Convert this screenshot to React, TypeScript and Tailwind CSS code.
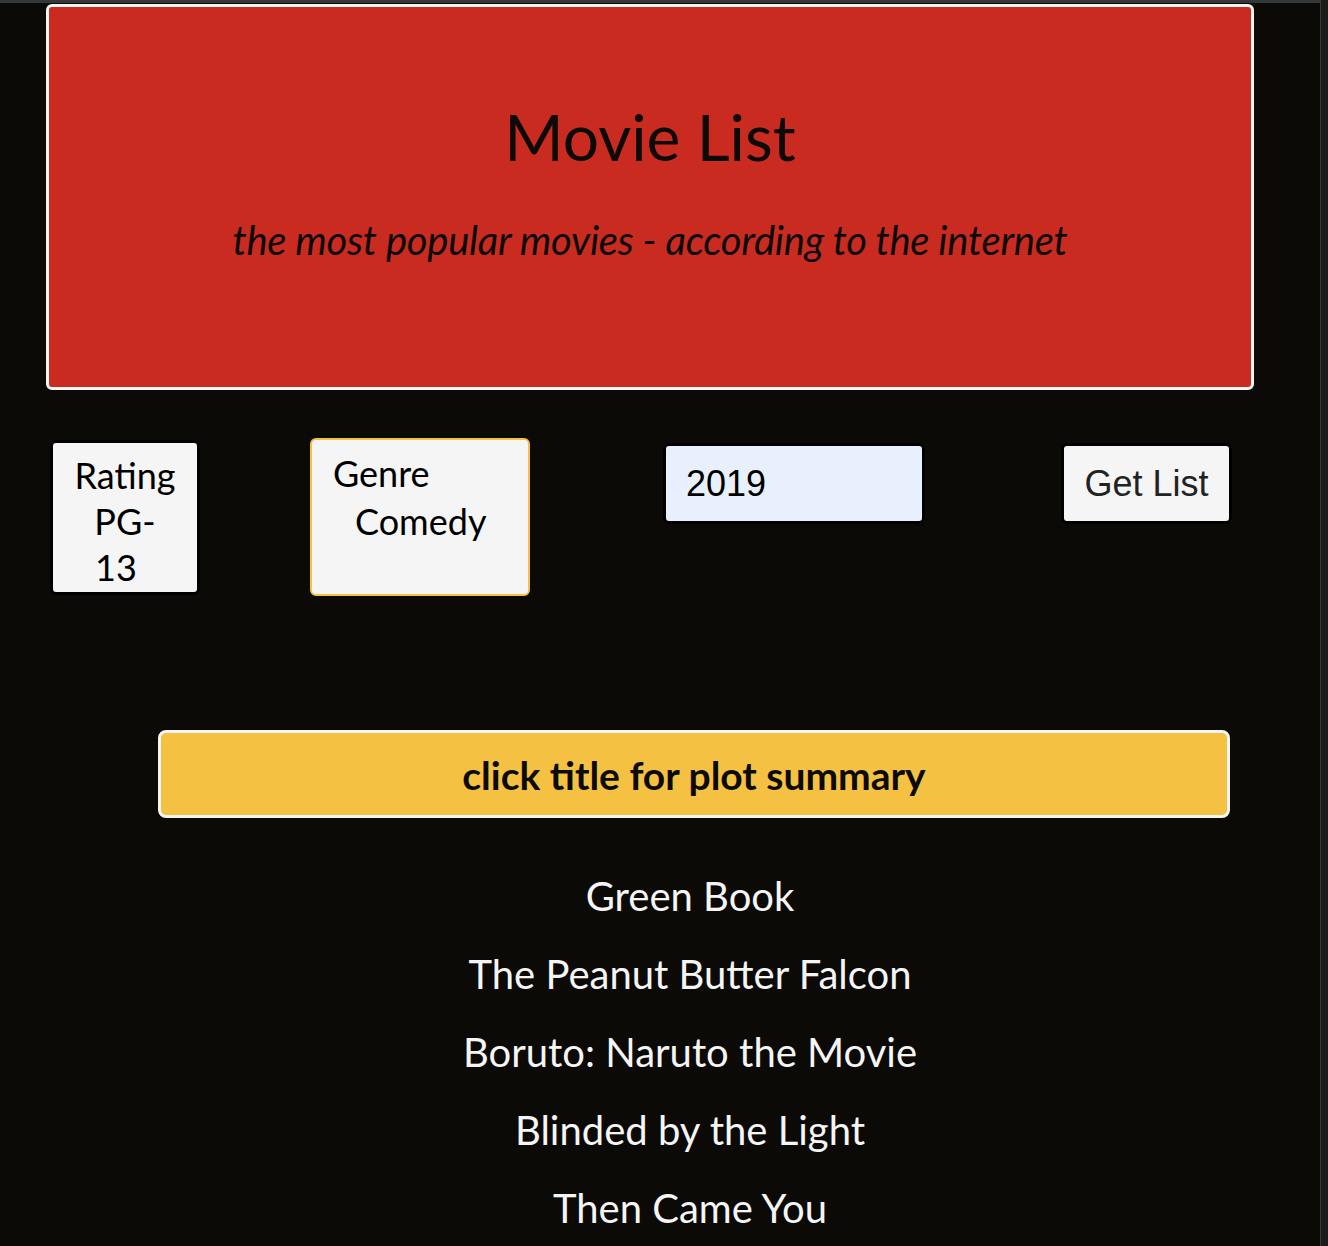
const movies = [
  "Green Book",
  "The Peanut Butter Falcon",
  "Boruto: Naruto the Movie",
  "Blinded by the Light",
  "Then Came You",
];

export default function App() {
  return (
    <div className="flex h-[1246px] w-full overflow-hidden bg-[#0b0a06] font-['Lato',sans-serif]">
      <div className="flex w-[1320px] flex-col">
        <div className="h-[3px] bg-[#35383b]" />

        {/* Header */}
        <header className="ml-[46px] mt-[1px] flex h-[386px] w-[1208px] flex-col items-center rounded-md border-[3px] border-[#f5f5f5] bg-[#c92b20] pt-[92px] text-[#0b0a06]">
          <h1 className="text-[64px] leading-[1.2]">Movie List</h1>
          <p className="mt-[40px] text-[40px] italic leading-[1.2] tracking-[-0.25px]">
            the most popular movies - according to the internet
          </p>
        </header>

        {/* Controls */}
        <div className="mt-[48px] flex items-start">
          <div className="ml-[50px] mt-[2px] flex h-[155px] w-[150px] flex-col items-center rounded-md border-[3px] border-black bg-[#f5f5f5] pt-[9px] text-center text-[36px] leading-[46px] text-black">
            <span>Rating</span>
            <span>PG-</span>
            <span className="-ml-[18px]">13</span>
          </div>
          <div className="ml-[110px] flex h-[158px] w-[220px] flex-col rounded-md border-2 border-[#f5c143] bg-[#f5f5f5] pl-[21px] pt-[9px] text-[36px] leading-[48px] text-black">
            <span>Genre</span>
            <span className="pl-[22px]">Comedy</span>
          </div>
          <input
            readOnly
            value="2019"
            className="ml-[133px] mt-[5px] h-[81px] w-[262px] rounded-md border-[3px] border-black bg-[#e8f0fe] px-[20px] font-['Liberation_Sans',sans-serif] text-[36px] text-black outline-none"
          />
          <button className="ml-[136px] mt-[5px] h-[81px] w-[171px] rounded-md border-[3px] border-black bg-[#f5f5f5] font-['Liberation_Sans',sans-serif] text-[36px] text-[#222]">
            Get List
          </button>
        </div>

        {/* Hint bar */}
        <div className="ml-[158px] mt-[134px] flex h-[88px] w-[1072px] items-center justify-center rounded-lg border-[3px] border-[#f5f5f5] bg-[#f5c143] pt-[2px] text-[39px] font-bold text-[#0b0a06]">
          click title for plot summary
        </div>

        {/* Movie list */}
        <ul className="ml-[158px] mt-[56px] flex w-[1064px] flex-col items-center gap-[34px] text-[40px] leading-[44px] text-[#f5f5f5]">
          {movies.map((m) => (
            <li key={m} className="cursor-pointer">
              {m}
            </li>
          ))}
        </ul>
      </div>
      <div className="w-[1px] bg-[#3a3a3a]" />
      <div className="flex-1 bg-[#1b1b1b]" />
    </div>
  );
}
